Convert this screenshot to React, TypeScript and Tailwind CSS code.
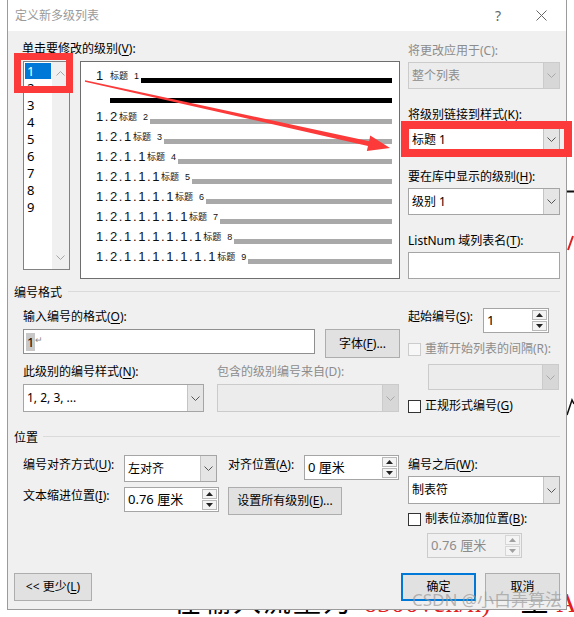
import React from 'react';

function U({ c }: { c: string }) {
  return <span className="underline underline-offset-[2px]">{c}</span>;
}

function Chevron({ color }: { color: string }) {
  return (
    <svg width="9" height="5" viewBox="0 0 9 5" fill="none">
      <path d="M0.5 0.5L4.5 4.5L8.5 0.5" stroke={color} />
    </svg>
  );
}

function Combo({ value, className, disabled }: { value?: string; className: string; disabled?: boolean }) {
  return (
    <div className={`flex border ${disabled ? 'border-[#cbcbcb] bg-[#ececec]' : 'border-[#a5a5a5] bg-white'} ${className}`}>
      <div className={`flex-1 flex items-center pl-[3px] text-[12px] ${disabled ? 'text-[#8c8c8c]' : 'text-black'}`}>
        {value}
      </div>
      <div
        className={`w-[16px] flex items-center justify-center border-l ${
          disabled ? 'border-[#cbcbcb] bg-[#d7d7d7]' : 'border-[#c4c4c4] bg-[#e5e5e5]'
        }`}
      >
        <Chevron color={disabled ? '#a8a8a8' : '#555555'} />
      </div>
    </div>
  );
}

function Spin({ value, className, disabled }: { value: string; className: string; disabled?: boolean }) {
  const tri = disabled ? '#a0a0a0' : '#222222';
  return (
    <div className={`flex border ${disabled ? 'border-[#cbcbcb] bg-[#f0f0f0]' : 'border-[#a5a5a5] bg-white'} ${className}`}>
      <div className={`flex-1 flex items-center pl-[3px] text-[13px] ${disabled ? 'text-[#8c8c8c]' : 'text-black'}`}>
        {value}
      </div>
      <div className="w-[17px] flex flex-col p-px gap-px">
        <div className={`flex-1 flex items-center justify-center border ${disabled ? 'border-[#d6d6d6]' : 'border-[#b9b9b9]'} bg-[#f4f4f4]`}>
          <svg width="7" height="4" viewBox="0 0 7 4">
            <path d="M0 4L3.5 0L7 4Z" fill={tri} />
          </svg>
        </div>
        <div className={`flex-1 flex items-center justify-center border ${disabled ? 'border-[#d6d6d6]' : 'border-[#b9b9b9]'} bg-[#f4f4f4]`}>
          <svg width="7" height="4" viewBox="0 0 7 4">
            <path d="M0 0L3.5 4L7 0Z" fill={tri} />
          </svg>
        </div>
      </div>
    </div>
  );
}

function Btn({ children, className, primary }: { children: React.ReactNode; className: string; primary?: boolean }) {
  return (
    <div
      className={`flex items-center justify-center bg-[#e1e1e1] text-[12px] text-black ${
        primary ? 'border-2 border-[#0078d7]' : 'border border-[#adadad]'
      } ${className}`}
    >
      {children}
    </div>
  );
}

function Check({ label, disabled }: { label: React.ReactNode; disabled?: boolean }) {
  return (
    <div className="flex items-center h-[16px]">
      <span className={`w-[13px] h-[13px] border ${disabled ? 'border-[#cccccc] bg-[#f7f7f7]' : 'border-[#333333] bg-white'}`} />
      <span className={`ml-[4px] text-[12px] leading-[16px] ${disabled ? 'text-[#8c8c8c]' : 'text-black'}`}>{label}</span>
    </div>
  );
}

function Section({ title, lineGap }: { title: string; lineGap: string }) {
  return (
    <div className="flex items-center h-[20px] mt-[3px]">
      <span className="text-[12px] leading-[16px] text-black">{title}</span>
      <div className={`flex-1 h-px bg-[#dadada] mb-[3px] ${lineGap}`} />
    </div>
  );
}

function Preview() {
  const rows = [2, 3, 4, 5, 6, 7, 8, 9];
  return (
    <div className="ml-[10px] w-[320px] h-[218px] border border-[#6e6e6e] bg-white pt-[4px] pl-[15px] pr-[7px] text-[#111111]">
      <div className="flex items-center h-[20px]">
        <span className="w-[14px] text-[13px] font-['Liberation_Sans',sans-serif]">1</span>
        <span className="text-[9px] leading-[12px]">标题</span>
        <span className="ml-[6px] text-[9px] leading-[12px] font-['Liberation_Sans',sans-serif]">1</span>
        <div className="flex-1 ml-[2px] h-[5px] bg-black mt-[8px]" />
      </div>
      <div className="ml-[14px] h-[5px] bg-black mt-[12px] mb-[4px]" />
      {rows.map((n) => (
        <div key={n} className="flex items-center h-[20px]">
          <span className="text-[13px] tracking-[1.6px] font-['Liberation_Sans',sans-serif]">
            {'1.2' + '.1'.repeat(n - 2)}
          </span>
          <span className="text-[9px] leading-[12px]">标题</span>
          <span className="ml-[6px] text-[9px] leading-[12px] font-['Liberation_Sans',sans-serif]">{n}</span>
          <div className="flex-1 ml-[2px] h-[5px] bg-[#a9a9a9] mt-[8px]" />
        </div>
      ))}
    </div>
  );
}

function LevelList() {
  const levels = [2, 3, 4, 5, 6, 7, 8, 9];
  return (
    <div className="ml-px w-[47px] h-[209px] border border-[#828282] bg-white flex">
      <div className="flex-1 pt-px text-[13px] leading-[16px] text-black">
        <div className="mx-px h-[16px] mb-px pl-[2px] bg-[#0078d7] text-white">1</div>
        {levels.map((n) => (
          <div key={n} className="h-[17px] pl-[3px]">
            {n}
          </div>
        ))}
      </div>
      <div className="w-[17px] bg-[#f0f0f0] flex flex-col items-center justify-between py-[9px]">
        <svg width="9" height="5" viewBox="0 0 9 5" fill="none">
          <path d="M0.5 4.5L4.5 0.5L8.5 4.5" stroke="#a6a6a6" />
        </svg>
        <svg width="9" height="5" viewBox="0 0 9 5" fill="none">
          <path d="M0.5 0.5L4.5 4.5L8.5 0.5" stroke="#a6a6a6" />
        </svg>
      </div>
    </div>
  );
}

export default function App() {
  const label = 'text-[12px] leading-[16px] text-black';
  const dim = 'text-[12px] leading-[16px] text-[#8c8c8c]';
  return (
    <div className="relative w-[574px] h-[617px] overflow-hidden bg-white font-['Noto_Sans','Noto_Sans_CJK_SC',sans-serif]">
      {/* document behind the dialog */}
      <div className="absolute left-[173px] top-[588px] flex items-start text-[28px] leading-[30px] font-['Liberation_Serif','Noto_Sans_CJK_SC',serif] whitespace-nowrap">
        <span className="text-black tracking-[2px]">在输入流量为</span>
        <span className="ml-[10px] text-[#e02020]">6500veh/h)</span>
        <span className="ml-[30px] text-black">至</span>
        <span className="ml-[8px] text-[#e02020]">A</span>
      </div>
      <svg className="absolute left-[566px] top-0" width="8" height="617" viewBox="0 0 8 617" fill="none">
        <path d="M1 191.5H8" stroke="#111111" strokeWidth="2" />
        <path d="M2 250L7 236" stroke="#e02020" strokeWidth="2" />
        <path d="M1 415L6 400L8 404" stroke="#111111" strokeWidth="1.5" />
      </svg>

      {/* dialog window */}
      <div className="absolute left-[7px] top-0 w-[560px] h-[610px] border-x border-b border-[#9b9b9b] bg-[#f0f0f0] flex flex-col">
        <div className="h-[31px] bg-white flex items-center pl-[7px] pr-[19px]">
          <span className="text-[12px] text-[#9a9a9a]">定义新多级列表</span>
          <span className="ml-auto text-[14px] text-[#666666]">?</span>
          <svg className="ml-[35px]" width="11" height="11" viewBox="0 0 11 11" fill="none">
            <path d="M0.5 0.5L10.5 10.5M10.5 0.5L0.5 10.5" stroke="#666666" />
          </svg>
        </div>

        <div className="flex-1 px-[6px]">
          {/* levels + preview */}
          <div className="flex h-[249px]">
            <div className="w-[394px] pl-[8px]">
              <div className={`mt-[10px] ${label}`}>
                单击要修改的级别(<U c="V" />):
              </div>
              <div className="flex mt-[4px]">
                <LevelList />
                <Preview />
              </div>
            </div>
            <div className="w-[152px]">
              <div className={`mt-[12px] ${dim}`}>将更改应用于(C):</div>
              <Combo className="mt-[3px] h-[27px]" value="整个列表" disabled />
              <div className={`mt-[18px] ${label}`}>
                将级别链接到样式(<U c="K" />):
              </div>
              <Combo className="mt-[3px] h-[27px]" value="标题 1" />
              <div className={`mt-[16px] ${label}`}>
                要在库中显示的级别(<U c="H" />):
              </div>
              <Combo className="mt-[3px] h-[27px]" value="级别 1" />
              <div className={`mt-[18px] ${label}`}>
                ListNum 域列表名(<U c="T" />):
              </div>
              <div className="mt-[3px] h-[27px] border border-[#a5a5a5] bg-white" />
            </div>
          </div>

          <Section title="编号格式" lineGap="ml-[6px]" />

          {/* number format */}
          <div className="flex h-[122px]">
            <div className="w-[394px] pl-[9px]">
              <div className={`mt-[6px] ${label}`}>
                输入编号的格式(<U c="O" />):
              </div>
              <div className="flex items-start mt-[4px]">
                <div className="w-[292px] h-[25px] border border-[#8f8f8f] bg-white flex items-center pl-[2px]">
                  <span className="bg-[#c8c8c8] text-[13px] leading-[18px] px-px text-black">1</span>
                  <span className="text-[9px] text-[#888888] -mt-[4px]">↵</span>
                </div>
                <Btn className="ml-[10px] w-[75px] h-[29px]">
                  字体(<U c="F" />)...
                </Btn>
              </div>
              <div className="flex mt-[6px]">
                <div className={`w-[194px] ${label}`}>
                  此级别的编号样式(<U c="N" />):
                </div>
                <div className={dim}>包含的级别编号来自(D):</div>
              </div>
              <div className="flex mt-[4px]">
                <Combo className="w-[181px] h-[28px]" value="1, 2, 3, ..." />
                <Combo className="ml-[13px] w-[182px] h-[28px]" disabled />
              </div>
            </div>
            <div className="w-[152px]">
              <div className="flex items-start mt-[5px]">
                <div className={`w-[75px] pt-px ${label}`}>
                  起始编号(<U c="S" />):
                </div>
                <Spin className="w-[66px] h-[25px]" value="1" />
              </div>
              <div className="mt-[8px]">
                <Check label="重新开始列表的间隔(R):" disabled />
              </div>
              <Combo className="ml-[20px] mt-[7px] w-[131px] h-[26px]" disabled />
              <div className="mt-[8px]">
                <Check
                  label={
                    <>
                      正规形式编号(<U c="G" />)
                    </>
                  }
                />
              </div>
            </div>
          </div>

          <Section title="位置" lineGap="ml-[5px]" />

          {/* position */}
          <div className="flex h-[125px]">
            <div className="w-[394px] pl-[9px]">
              <div className="flex items-start mt-[7px]">
                <div className={`w-[101px] pt-[2px] ${label}`}>
                  编号对齐方式(<U c="U" />):
                </div>
                <Combo className="w-[93px] h-[27px]" value="左对齐" />
                <div className={`ml-[11px] w-[76px] pt-[2px] ${label}`}>
                  对齐位置(<U c="A" />):
                </div>
                <Spin className="w-[95px] h-[25px]" value="0 厘米" />
              </div>
              <div className="flex items-start mt-[5px]">
                <div className={`w-[101px] pt-px ${label}`}>
                  文本缩进位置(<U c="I" />):
                </div>
                <Spin className="w-[95px] h-[25px]" value="0.76 厘米" />
                <Btn className="ml-[9px] w-[114px] h-[28px]">
                  设置所有级别(<U c="E" />)...
                </Btn>
              </div>
            </div>
            <div className="w-[152px]">
              <div className={`mt-[9px] ${label}`}>
                编号之后(<U c="W" />):
              </div>
              <Combo className="mt-[3px] h-[28px]" value="制表符" />
              <div className="mt-[7px]">
                <Check
                  label={
                    <>
                      制表位添加位置(<U c="B" />):
                    </>
                  }
                />
              </div>
              <Spin className="ml-[19px] mt-[6px] w-[95px] h-[25px]" value="0.76 厘米" disabled />
            </div>
          </div>

          {/* footer */}
          <div className="flex h-[28px]">
            <Btn className="w-[78px] h-[28px]">
              &lt;&lt; 更少(<U c="L" />)
            </Btn>
            <div className="ml-auto flex gap-[9px]">
              <Btn className="w-[75px] h-[28px]" primary>
                确定
              </Btn>
              <Btn className="w-[75px] h-[28px]">取消</Btn>
            </div>
          </div>
        </div>
      </div>

      {/* annotations */}
      <div className="absolute left-[14px] top-[53px] w-[59px] h-[40px] border-[7px] border-[#fc3a3a]" />
      <div className="absolute left-[401px] top-[121px] w-[171px] h-[36px] border-[8px] border-[#fc3a3a]" />
      <svg className="absolute left-0 top-0 pointer-events-none" width="574" height="617" viewBox="0 0 574 617">
        <polygon
          points="85.1,80.3 369.2,141.2 370.2,135.5 390,148 366.8,151.1 368,146 84.9,81.7"
          fill="#fc3a3a"
        />
      </svg>
      <div className="absolute left-[412px] top-[589px] text-[17px] leading-[22px] text-[#9a9a9a]/70 whitespace-nowrap">
        CSDN @小白弄算法
      </div>
    </div>
  );
}
